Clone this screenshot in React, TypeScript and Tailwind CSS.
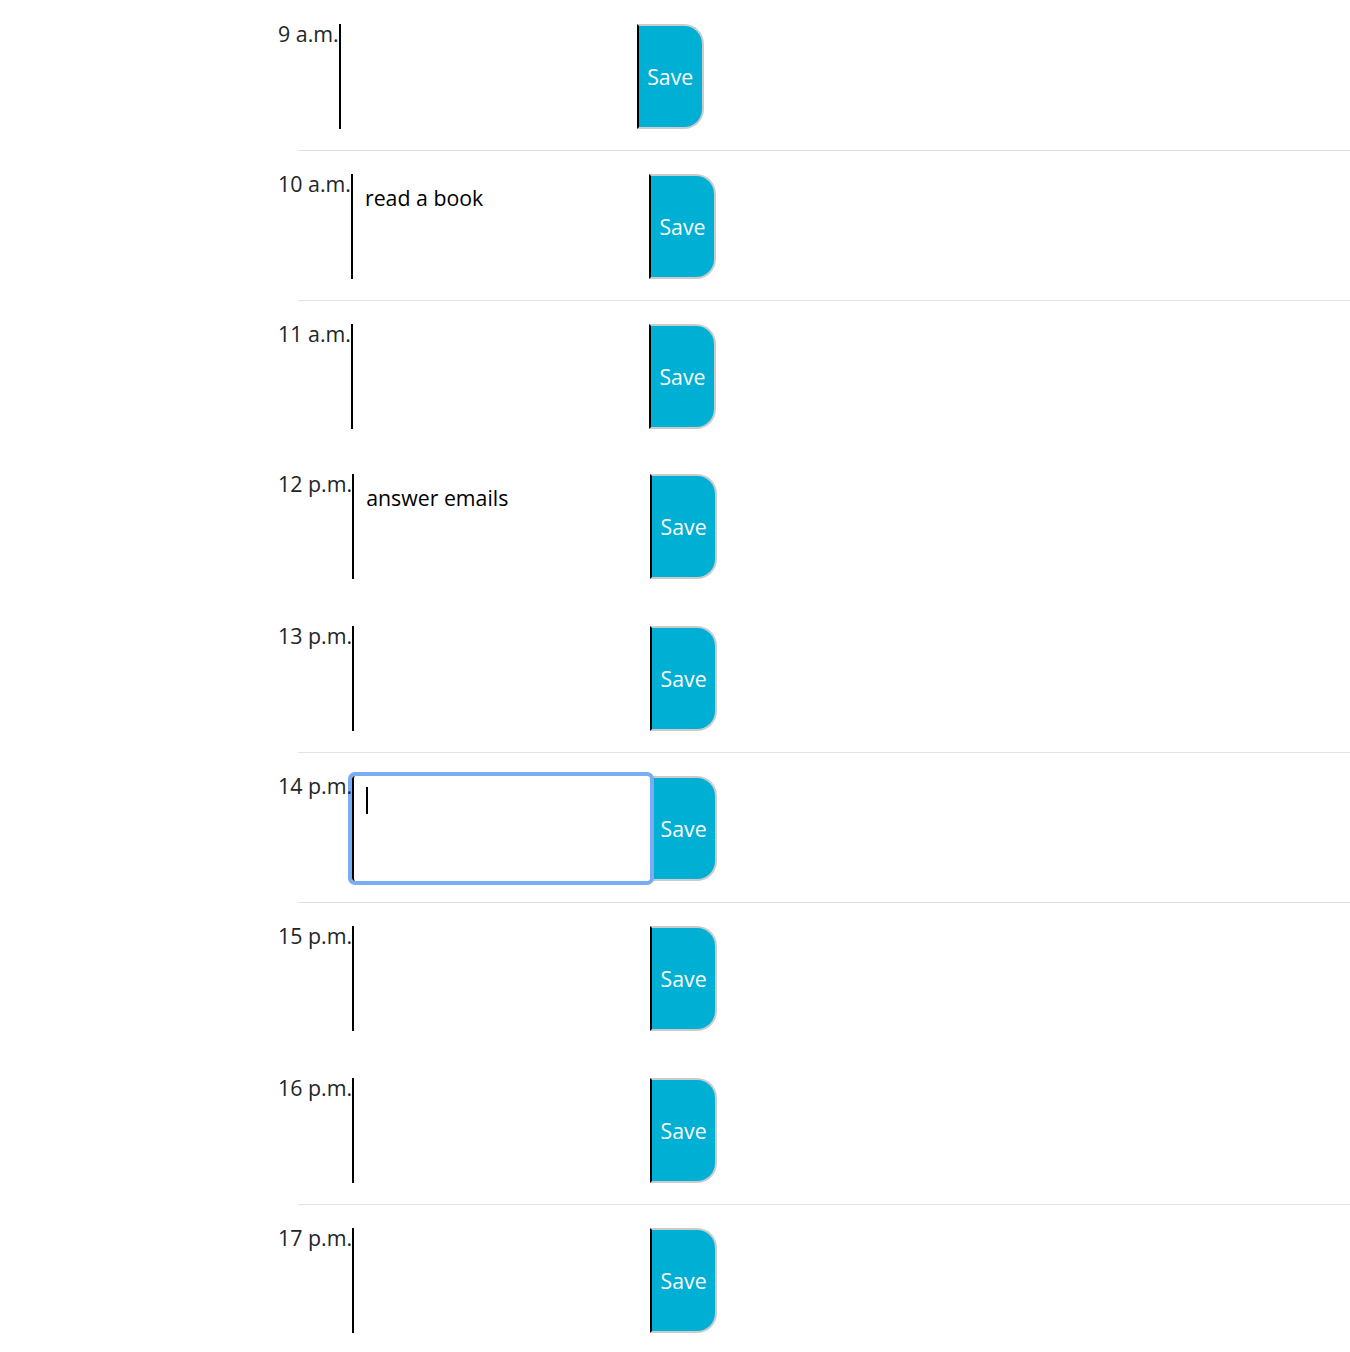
const hours = [
  { label: '9 a.m.', text: '', gap: 'h-[45px]', line: true },
  { label: '10 a.m.', text: 'read a book', gap: 'h-[45px]', line: true },
  { label: '11 a.m.', text: '', gap: 'h-[45px]', line: false },
  { label: '12 p.m.', text: 'answer emails', gap: 'h-[47px]', line: false },
  { label: '13 p.m.', text: '', gap: 'h-[45px]', line: true },
  { label: '14 p.m.', text: '', gap: 'h-[45px]', line: true, focused: true },
  { label: '15 p.m.', text: '', gap: 'h-[47px]', line: false },
  { label: '16 p.m.', text: '', gap: 'h-[45px]', line: true },
  { label: '17 p.m.', text: '', gap: 'h-[20px]', line: false },
];

const App = () => {
  return (
    <div className="min-h-screen bg-white pt-[24px] font-['Open_Sans',sans-serif]">
      {hours.map((hour) => (
        <div key={hour.label}>
          {/* time block */}
          <div className="flex h-[105px] pl-[278px]">
            <div className="relative z-20 flex-none text-[21.4px] leading-[20px] text-[#212529]">{hour.label}</div>
            <div className="relative flex-none">
              <textarea
                defaultValue={hour.text}
                className={
                  hour.focused
                    ? 'relative z-10 block h-full w-[298px] resize-none rounded-[3px] border-0 border-l-2 border-black bg-transparent px-[12px] pt-[8px] text-[21.3px] leading-[32px] text-black outline-[4px] outline-[#7aabf5] outline-solid'
                    : 'block h-full w-[298px] resize-none border-0 border-l-2 border-black bg-transparent px-[12px] pt-[8px] text-[21.3px] leading-[32px] text-black outline-none'
                }
              />
              {hour.focused && (
                <div className="absolute left-[14px] top-[11px] z-20 h-[27px] w-[2px] bg-black"></div>
              )}
            </div>
            <button className="h-full w-[67px] flex-none rounded-r-[20px] border-2 border-l-2 border-[#cbcbcb] border-l-black bg-[#00afd4] text-[21.3px] text-white">
              Save
            </button>
          </div>
          {/* spacer with optional divider */}
          <div className={hour.gap + ' pt-[21px] pl-[298px]'}>
            {hour.line && <div className="h-px bg-[#e3e3e3]"></div>}
          </div>
        </div>
      ))}
    </div>
  );
};

export default App;
